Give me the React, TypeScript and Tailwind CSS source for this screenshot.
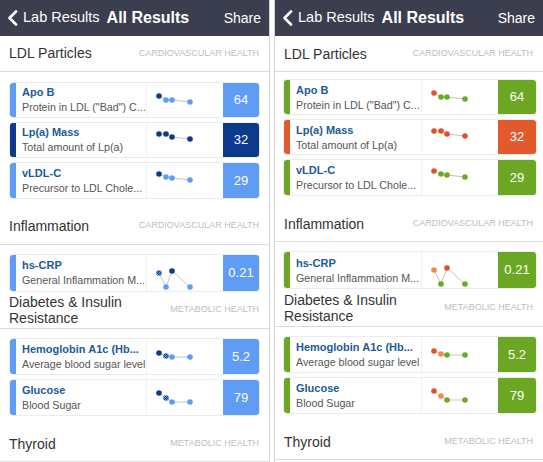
import React from "react";

type Dot = { x: number; y: number; c: string };
type Row = {
  title: string;
  sub: string;
  value: string;
  bar: string;
  h: string;
  dots: Dot[];
};

type Theme = {
  light: string;
  dark: string;
  mid: string;
  barLight: string;
  barDark: string;
  pid: string;
  valW: string;
};

const blue: Theme = {
  light: "#5e9cf6",
  dark: "#0d3a8a",
  mid: "url(#hatchB)",
  barLight: "bg-[#5e9cf6]",
  barDark: "bg-[#0b3a8e]",
  pid: "hatchB",
  valW: "w-[36px]",
};
const green: Theme = {
  light: "#6aaa1e",
  dark: "#e0512a",
  mid: "#ef8c4c",
  barLight: "bg-[#6ba723]",
  barDark: "bg-[#e25a2c]",
  pid: "hatchG",
  valW: "w-[38px]",
};

function rows(t: Theme) {
  const L = t.light,
    D = t.dark,
    M = t.mid;
  const ldl: Row[] = [
    {
      title: "Apo B",
      sub: 'Protein in LDL ("Bad") C...',
      value: "64",
      bar: t.barLight,
      h: "h-[36px]",
      dots: [
        { x: 12, y: 13, c: D },
        { x: 19, y: 17, c: L },
        { x: 25, y: 17, c: L },
        { x: 43, y: 19, c: L },
      ],
    },
    {
      title: "Lp(a) Mass",
      sub: "Total amount of Lp(a)",
      value: "32",
      bar: t.barDark,
      h: "h-[36px]",
      dots: [
        { x: 12, y: 11, c: D },
        { x: 19, y: 11, c: D },
        { x: 25, y: 14, c: D },
        { x: 43, y: 16, c: D },
      ],
    },
    {
      title: "vLDL-C",
      sub: "Precursor to LDL Chole...",
      value: "29",
      bar: t.barLight,
      h: "h-[37px]",
      dots: [
        { x: 12, y: 11, c: D },
        { x: 19, y: 14, c: L },
        { x: 25, y: 15, c: L },
        { x: 43, y: 17, c: L },
      ],
    },
  ];
  const infl: Row[] = [
    {
      title: "hs-CRP",
      sub: "General Inflammation M...",
      value: "0.21",
      bar: t.barLight,
      h: "h-[38px]",
      dots: [
        { x: 12, y: 18, c: M },
        { x: 19, y: 32, c: L },
        { x: 25, y: 16, c: D },
        { x: 43, y: 32, c: L },
      ],
    },
  ];
  const diab: Row[] = [
    {
      title: "Hemoglobin A1c (Hb...",
      sub: "Average blood sugar level",
      value: "5.2",
      bar: t.barLight,
      h: "h-[37px]",
      dots: [
        { x: 12, y: 14, c: D },
        { x: 19, y: 17, c: M },
        { x: 25, y: 18, c: L },
        { x: 43, y: 18, c: L },
      ],
    },
    {
      title: "Glucose",
      sub: "Blood Sugar",
      value: "79",
      bar: t.barLight,
      h: "h-[37px]",
      dots: [
        { x: 12, y: 13, c: D },
        { x: 19, y: 18, c: M },
        { x: 25, y: 22, c: L },
        { x: 43, y: 22, c: L },
      ],
    },
  ];
  return { ldl, infl, diab };
}

function Card({ r, t }: { r: Row; t: Theme }) {
  const pts = r.dots.map((d) => `${d.x},${d.y}`).join(" ");
  return (
    <div className={`flex ${r.h} rounded-[4px] border border-[#ececec] overflow-hidden bg-white`}>
      <div className={`w-[6px] shrink-0 ${r.bar}`} />
      <div className="flex-1 min-w-0 pl-[6px] flex flex-col justify-center border-r border-[#efefef]">
        <div className="text-[11px] font-bold text-[#1e5a96] leading-[15px] whitespace-nowrap">
          {r.title}
        </div>
        <div className="text-[10.7px] text-[#555] leading-[14px] whitespace-nowrap">
          {r.sub}
        </div>
      </div>
      <div className="w-[76px] shrink-0">
        <svg width="76" height="38" viewBox="0 0 76 38">
          <defs>
            <pattern id={t.pid} width="2" height="2" patternUnits="userSpaceOnUse">
              <rect width="2" height="2" fill="#5e9cf6" />
              <rect width="1" height="1" fill="#0d3a8a" />
              <rect x="1" y="1" width="1" height="1" fill="#0d3a8a" />
            </pattern>
          </defs>
          <polyline points={pts} fill="none" stroke="#c4c4c4" strokeWidth="1" />
          {r.dots.map((d, i) => (
            <circle key={i} cx={d.x} cy={d.y} r="2.8" fill={d.c} />
          ))}
        </svg>
      </div>
      <div className={`${t.valW} shrink-0 flex items-center justify-center text-white text-[13px] ${r.bar}`}>
        {r.value}
      </div>
    </div>
  );
}

function SectionHead({
  title,
  tag,
  tall,
}: {
  title: React.ReactNode;
  tag: string;
  tall?: boolean;
}) {
  return (
    <div
      className={`flex items-center justify-between pl-[9px] pr-[10px] border-b border-[#dcdcdc] ${
        tall ? "h-[38px]" : "h-[36px]"
      }`}
    >
      <div className="text-[14px] text-[#333] leading-[16px]">{title}</div>
      <div className="text-[9px] text-[#bdbdbd]">{tag}</div>
    </div>
  );
}

function Panel({ t, firstPad, px }: { t: Theme; firstPad: string; px: string }) {
  const { ldl, infl, diab } = rows(t);
  return (
    <div className="flex flex-col h-[462px] overflow-hidden bg-white">
      <div className="h-[36px] bg-[#3b3e4f] flex items-center text-white shrink-0">
        <svg width="11" height="16" viewBox="0 0 11 16" className="ml-[7px]">
          <polyline points="9,1.5 2.5,8 9,14.5" fill="none" stroke="#fff" strokeWidth="2.6" strokeLinecap="round" strokeLinejoin="round" />
        </svg>
        <span className="ml-[5px] text-[14.5px]">Lab Results</span>
        <span className="ml-[7px] text-[16px] font-bold">All Results</span>
        <span className="ml-auto mr-[8px] text-[14px]">Share</span>
      </div>
      <SectionHead title="LDL Particles" tag="CARDIOVASCULAR HEALTH" />
      <div className={`flex flex-col gap-[4px] ${px} ${firstPad} pb-[10px]`}>
        {ldl.map((r) => (
          <Card key={r.title} r={r} t={t} />
        ))}
      </div>
      <SectionHead title="Inflammation" tag="CARDIOVASCULAR HEALTH" />
      <div className={`flex flex-col gap-[4px] ${px} pt-[9px]`}>
        {infl.map((r) => (
          <Card key={r.title} r={r} t={t} />
        ))}
      </div>
      <SectionHead
        tall
        title={
          <>
            Diabetes &amp; Insulin
            <br />
            Resistance
          </>
        }
        tag="METABOLIC HEALTH"
      />
      <div className={`flex flex-col gap-[4px] ${px} pt-[9px] pb-[10px]`}>
        {diab.map((r) => (
          <Card key={r.title} r={r} t={t} />
        ))}
      </div>
      <SectionHead title="Thyroid" tag="METABOLIC HEALTH" />
    </div>
  );
}

export default function App() {
  return (
    <div className="w-[543px] h-[462px] flex bg-white font-['Liberation_Sans',Arial,sans-serif] overflow-hidden">
      <div className="w-[270px] shrink-0 border-r border-[#d6d6d6]">
        <Panel t={blue} firstPad="pt-[10px]" px="pl-[9px] pr-[9px]" />
      </div>
      <div className="w-[4px] shrink-0 bg-white" />
      <div className="flex-1 min-w-0 border-l border-[#d6d6d6]">
        <Panel t={green} firstPad="pt-[7px]" px="pl-[8px] pr-[6px]" />
      </div>
    </div>
  );
}
